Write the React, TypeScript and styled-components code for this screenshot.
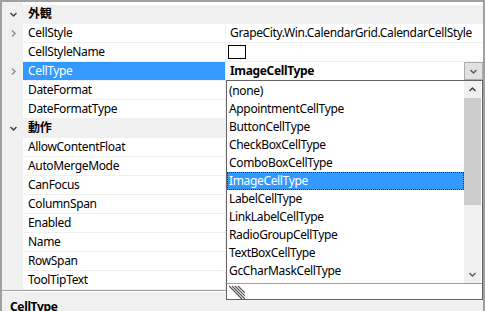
import styled, { createGlobalStyle } from "styled-components";

const GlobalStyle = createGlobalStyle`
    html, body {
        margin: 0;
        padding: 0;
        background: #ffffff;
    }
    body {
        font-family: "Segoe UI", "Noto Sans", "Noto Sans CJK JP", sans-serif;
        font-size: 12px;
        letter-spacing: -0.35px;
        color: #000;
    }
`;

const Frame = styled.div`
    position: relative;
    width: 485px;
    height: 311px;
    box-sizing: border-box;
    border-top: 2px solid #a0a0a0;
    border-left: 2px solid #a0a0a0;
    border-right: 2px solid #a0a0a0;
    display: flex;
    flex-direction: column;
    overflow: hidden;
    background: #f0f0f0;
`;

const Grid = styled.div`
    height: 295px;
    padding-top: 3px;
    box-sizing: border-box;
    display: flex;
    flex-direction: column;
    background: linear-gradient(to right, #f0f0f0 21px, #ffffff 21px);
    border-bottom: 1px solid #a0a0a0;
`;

const Row = styled.div<{ $category?: boolean }>`
    display: grid;
    grid-template-columns: 21px 203px 1fr;
    height: 18px;
    border-bottom: 1px solid #f0f0f0;
    background: ${(p) => (p.$category ? "#f0f0f0" : "transparent")};
    font-weight: ${(p) => (p.$category ? 700 : 400)};
    line-height: 18px;
`;

const Gutter = styled.div`
    display: flex;
    align-items: center;
    justify-content: center;
    padding-left: 2px;
    color: #555;
`;

const Name = styled.div<{ $selected?: boolean }>`
    padding-left: 5px;
    white-space: nowrap;
    overflow: hidden;
    border-right: 1px solid #f0f0f0;
    background: ${(p) => (p.$selected ? "#3399ff" : "transparent")};
    color: ${(p) => (p.$selected ? "#ffffff" : "#000")};
`;

const Value = styled.div<{ $bold?: boolean }>`
    position: relative;
    padding-left: 4px;
    white-space: nowrap;
    overflow: hidden;
    display: flex;
    align-items: center;
    font-weight: ${(p) => (p.$bold ? 700 : 400)};
`;

const ColorBox = styled.span`
    display: inline-block;
    width: 18px;
    height: 14px;
    box-sizing: border-box;
    border: 1px solid #000;
    background: #fff;
    margin-left: -2px;
`;

const DropButton = styled.span`
    position: absolute;
    right: 0;
    top: 0;
    width: 19px;
    height: 18px;
    box-sizing: border-box;
    border: 1px solid #adadad;
    background: #e1e1e1;
    display: flex;
    align-items: center;
    justify-content: center;
`;

const Description = styled.div`
    flex: 1;
    border-top: 1px solid #ffffff;
    padding: 6px 0 0 8px;
    font-weight: 700;
    line-height: 18px;
    background: #f0f0f0;
`;

const Popup = styled.div`
    position: absolute;
    left: 224px;
    top: 78px;
    width: 257px;
    height: 220px;
    box-sizing: border-box;
    border: 1px solid #646464;
    background: #fff;
    display: flex;
    flex-direction: column;
`;

const ListArea = styled.div`
    flex: 1;
    display: flex;
    border-bottom: 1px solid #a0a0a0;
`;

const Items = styled.div`
    flex: 1;
    display: flex;
    flex-direction: column;
    padding-top: 1px;
`;

const Item = styled.div<{ $selected?: boolean }>`
    height: 18px;
    line-height: 18px;
    padding-left: 2px;
    box-sizing: border-box;
    white-space: nowrap;
    background: ${(p) => (p.$selected ? "#3399ff" : "transparent")};
    color: ${(p) => (p.$selected ? "#ffffff" : "#000")};
    outline: ${(p) => (p.$selected ? "1px dotted #1a3a5a" : "none")};
    outline-offset: -1px;
`;

const ScrollBar = styled.div`
    width: 17px;
    background: #f0f0f0;
    display: flex;
    flex-direction: column;
    margin-right: 1px;
`;

const ArrowBtn = styled.div`
    height: 17px;
    display: flex;
    align-items: center;
    justify-content: center;
`;

const Thumb = styled.div`
    height: 107px;
    background: #cdcdcd;
`;

const Track = styled.div`
    flex: 1;
`;

const GripBar = styled.div`
    height: 15px;
    position: relative;
`;

const Chevron = ({ dir, color = "#606060", size = 9 }: { dir: "down" | "up" | "right"; color?: string; size?: number }) => {
    const d =
        dir === "down" ? "M1.5 3 L4.5 6 L7.5 3" : dir === "up" ? "M1.5 6 L4.5 3 L7.5 6" : "M3 1.5 L6 4.5 L3 7.5";
    return (
        <svg width={size} height={size} viewBox="0 0 9 9">
            <path d={d} fill="none" stroke={color} strokeWidth="1.5" />
        </svg>
    );
};

const Grip = () => (
    <svg width="16" height="15" viewBox="0 0 16 15" style={{ position: "absolute", left: 2, top: 1 }}>
        {[0, 3, 6, 9].map((o) => (
            <path key={o} d={`M${o} 1 L${o + 13} 14`} stroke="#555" strokeWidth="1.2" />
        ))}
    </svg>
);

interface IProp {
    name: string;
    value?: string;
    expand?: boolean;
}

const appearance: IProp[] = [
    { name: "CellStyle", value: "GrapeCity.Win.CalendarGrid.CalendarCellStyle", expand: true },
    { name: "CellStyleName" },
    { name: "CellType", expand: true },
    { name: "DateFormat" },
    { name: "DateFormatType" },
];

const behavior: IProp[] = [
    { name: "AllowContentFloat" },
    { name: "AutoMergeMode" },
    { name: "CanFocus" },
    { name: "ColumnSpan" },
    { name: "Enabled" },
    { name: "Name" },
    { name: "RowSpan" },
    { name: "ToolTipText" },
];

const cellTypes = [
    "(none)",
    "AppointmentCellType",
    "ButtonCellType",
    "CheckBoxCellType",
    "ComboBoxCellType",
    "ImageCellType",
    "LabelCellType",
    "LinkLabelCellType",
    "RadioGroupCellType",
    "TextBoxCellType",
    "GcCharMaskCellType",
];

function App() {
    return (
        <>
            <GlobalStyle />
            <Frame>
                <Grid>
                    <Row $category>
                        <Gutter><Chevron dir="down" color="#404040" /></Gutter>
                        <Name>外観</Name>
                        <Value />
                    </Row>
                    {appearance.map((p) => (
                        <Row key={p.name}>
                            <Gutter>{p.expand && <Chevron dir="right" color="#909090" />}</Gutter>
                            <Name $selected={p.name === "CellType"}>{p.name}</Name>
                            {p.name === "CellStyleName" ? (
                                <Value><ColorBox /></Value>
                            ) : p.name === "CellType" ? (
                                <Value $bold>
                                    ImageCellType
                                    <DropButton><Chevron dir="down" color="#606060" /></DropButton>
                                </Value>
                            ) : (
                                <Value>{p.value}</Value>
                            )}
                        </Row>
                    ))}
                    <Row $category>
                        <Gutter><Chevron dir="down" color="#404040" /></Gutter>
                        <Name>動作</Name>
                        <Value />
                    </Row>
                    {behavior.map((p) => (
                        <Row key={p.name}>
                            <Gutter />
                            <Name>{p.name}</Name>
                            <Value />
                        </Row>
                    ))}
                </Grid>
                <Description>CellType</Description>
                <Popup>
                    <ListArea>
                        <Items>
                            {cellTypes.map((t) => (
                                <Item key={t} $selected={t === "ImageCellType"}>{t}</Item>
                            ))}
                        </Items>
                        <ScrollBar>
                            <ArrowBtn><Chevron dir="up" color="#404040" /></ArrowBtn>
                            <Thumb />
                            <Track />
                            <ArrowBtn><Chevron dir="down" color="#606060" /></ArrowBtn>
                        </ScrollBar>
                    </ListArea>
                    <GripBar><Grip /></GripBar>
                </Popup>
            </Frame>
        </>
    );
}

export default App;
